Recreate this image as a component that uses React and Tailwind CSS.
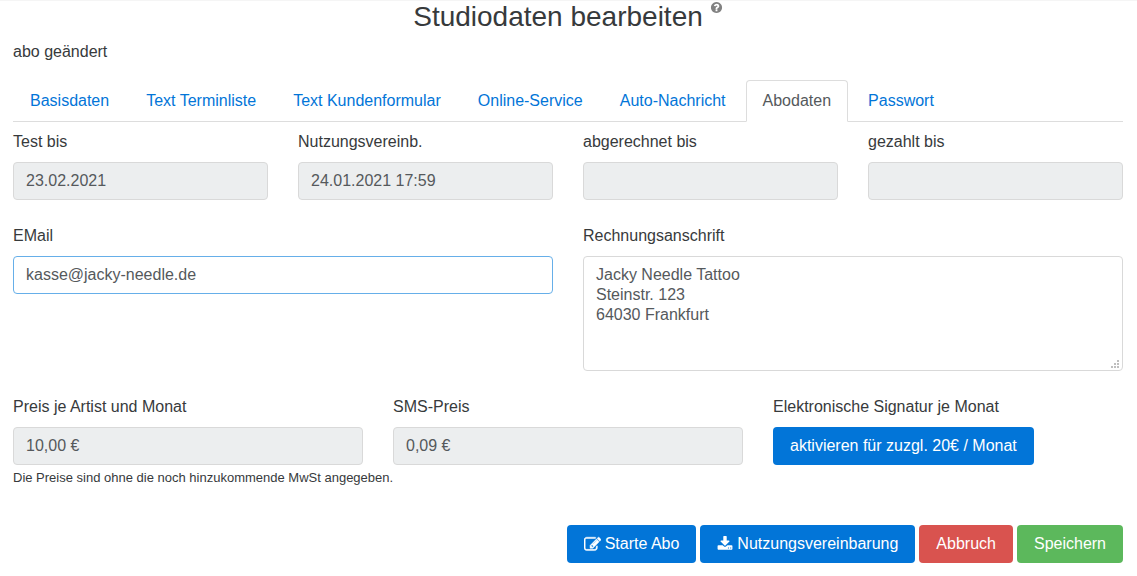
const tabs = [
  "Basisdaten",
  "Text Terminliste",
  "Text Kundenformular",
  "Online-Service",
  "Auto-Nachricht",
  "Abodaten",
  "Passwort",
];

const icons = {
  edit: "M888 1184l116-116-152-152-116 116v56h96v96h56zm440-720q-16-16-33 1l-350 350q-17 17-1 33t33-1l350-350q17-17 1-33zm80 594v190q0 119-84.5 203.5t-203.5 84.5h-832q-119 0-203.5-84.5t-84.5-203.5v-832q0-119 84.5-203.5t203.5-84.5h832q63 0 117 25 15 7 18 23 3 17-9 29l-49 49q-14 14-32 8-23-6-45-6h-832q-66 0-113 47t-47 113v832q0 66 47 113t113 47h832q66 0 113-47t47-113v-126q0-13 9-22l64-64q15-15 35-7t20 29zm-96-738l288 288-672 672h-288v-288zm444 132l-92 92-288-288 92-92q28-28 68-28t68 28l152 152q28 28 28 68t-28 68z",
  download:
    "M1344 1344q0-26-19-45t-45-19-45 19-19 45 19 45 45 19 45-19 19-45zm256 0q0-26-19-45t-45-19-45 19-19 45 19 45 45 19 45-19 19-45zm128-224v320q0 40-28 68t-68 28h-1472q-40 0-68-28t-28-68v-320q0-40 28-68t68-28h465l135 136q58 56 136 56t136-56l136-136h464q40 0 68 28t28 68zm-325-569q17 41-14 70l-448 448q-18 19-45 19t-45-19l-448-448q-31-29-14-70 17-39 59-39h256v-448q0-26 19-45t45-19h256q26 0 45 19t19 45v448h256q42 0 59 39z",
  help: "M1024 1376v-192q0-14-9-23t-23-9h-192q-14 0-23 9t-9 23v192q0 14 9 23t23 9h192q14 0 23-9t9-23zm256-672q0-88-55.5-163t-138.5-116-170-41q-243 0-371 213-15 24 8 42l132 100q7 6 19 6 16 0 25-12 53-68 86-92 34-24 86-24 48 0 85.5 26t37.5 59q0 38-20 61t-68 45q-63 28-115.5 86.5t-52.5 125.5v36q0 14 9 23t23 9h192q14 0 23-9t9-23q0-19 21.5-49.5t54.5-49.5q32-18 49-28.5t46-35 44.5-48 28-60.5 12.5-81zm384 192q0 209-103 385.5t-279.5 279.5-385.5 103-385.5-103-279.5-279.5-103-385.5 103-385.5 279.5-279.5 385.5-103 385.5 103 279.5 279.5 103 385.5z",
};

function Icon({ name, className }) {
  return (
    <svg
      viewBox="0 0 1792 1792"
      fill="currentColor"
      aria-hidden="true"
      className={className}
    >
      <path d={icons[name]} />
    </svg>
  );
}

function Field({ id, label, value, type = "text", readOnly }) {
  return (
    <div className="flex min-w-0 flex-col gap-2">
      <label htmlFor={id}>{label}</label>
      <input
        id={id}
        type={type}
        defaultValue={value}
        readOnly={readOnly}
        className={
          readOnly
            ? "h-[38px] w-full rounded border border-[#d9d9d9] bg-[#eceeef] px-3 text-[#55595c] outline-none"
            : "h-[38px] w-full rounded border border-[#66afe9] bg-white px-3 text-[#55595c] outline-none"
        }
      />
    </div>
  );
}

function Button({ color = "bg-[#0275d8]", children }) {
  return (
    <button
      type="button"
      className={`flex h-[38px] items-center gap-1 rounded px-[17px] whitespace-nowrap text-white ${color}`}
    >
      {children}
    </button>
  );
}

export default function App() {
  return (
    <main className="border-t border-[#f5f5f5] bg-white pr-3.5 pb-3 pl-[13px] font-['Liberation_Sans',Arial,sans-serif] text-base text-[#373a3c]">
      <header className="flex h-8 items-start justify-center gap-[7px]">
        <h1 className="text-[28px] leading-8">Studiodaten bearbeiten</h1>
        <button type="button" aria-label="Hilfe" className="text-[#818181]">
          <Icon name="help" className="size-[13px]" />
        </button>
      </header>

      <p className="mt-[7px]">abo geändert</p>

      <nav className="mt-4 flex gap-[3px] border-b border-[#dddddd]">
        {tabs.map((tab) => (
          <a
            key={tab}
            href="#"
            aria-current={tab === "Abodaten" ? "page" : undefined}
            className={
              tab === "Abodaten"
                ? "-mb-px rounded-t border border-[#dddddd] border-b-white bg-white px-4 py-2 whitespace-nowrap text-[#55595c]"
                : "-mb-px border border-transparent px-4 py-2 whitespace-nowrap text-[#0275d8]"
            }
          >
            {tab}
          </a>
        ))}
      </nav>

      <form className="mt-2">
        <div className="grid grid-cols-4 gap-[30px]">
          <Field id="test" label="Test bis" value="23.02.2021" readOnly />
          <Field
            id="nutzung"
            label="Nutzungsvereinb."
            value="24.01.2021 17:59"
            readOnly
          />
          <Field id="abgerechnet" label="abgerechnet bis" readOnly />
          <Field id="gezahlt" label="gezahlt bis" readOnly />
        </div>

        <div className="mt-6 grid grid-cols-2 gap-[30px]">
          <Field
            id="email"
            label="EMail"
            type="email"
            value="kasse@jacky-needle.de"
          />
          <div className="flex min-w-0 flex-col gap-2">
            <label htmlFor="anschrift">Rechnungsanschrift</label>
            <div className="relative flex">
              <textarea
                id="anschrift"
                className="h-[115px] w-full resize-none rounded border border-[#d9d9d9] px-3 py-2 leading-5 text-[#55595c] outline-none"
                defaultValue={
                  "Jacky Needle Tattoo\nSteinstr. 123\n64030 Frankfurt"
                }
              />
              {/* resize grip */}
              <svg
                viewBox="0 0 8 8"
                fill="#bfbfbf"
                aria-hidden="true"
                className="pointer-events-none absolute right-1 bottom-[3px] size-2"
              >
                <path d="M6 0h2v2H6zM3 3h2v2H3zM6 3h2v2H6zM0 6h2v2H0zM3 6h2v2H3zM6 6h2v2H6z" />
              </svg>
            </div>
          </div>
        </div>

        <div className="mt-6 grid grid-cols-3 gap-[30px]">
          <Field
            id="preis"
            label="Preis je Artist und Monat"
            value="10,00 €"
            readOnly
          />
          <Field id="sms" label="SMS-Preis" value="0,09 €" readOnly />
          <div className="flex flex-col items-start gap-2">
            <span>Elektronische Signatur je Monat</span>
            <Button>aktivieren für zuzgl. 20€ / Monat</Button>
          </div>
        </div>
        <p className="mt-[3px] text-[13px] leading-5">
          Die Preise sind ohne die noch hinzukommende MwSt angegeben.
        </p>

        <div className="mt-[37px] flex justify-end gap-1">
          <Button>
            <Icon
              name="edit"
              className="size-[17px] stroke-current stroke-[50]"
            />
            Starte Abo
          </Button>
          <Button>
            <Icon name="download" className="size-4" />
            Nutzungsvereinbarung
          </Button>
          <Button color="bg-[#d9534f]">Abbruch</Button>
          <Button color="bg-[#5cb85c]">Speichern</Button>
        </div>
      </form>
    </main>
  );
}
